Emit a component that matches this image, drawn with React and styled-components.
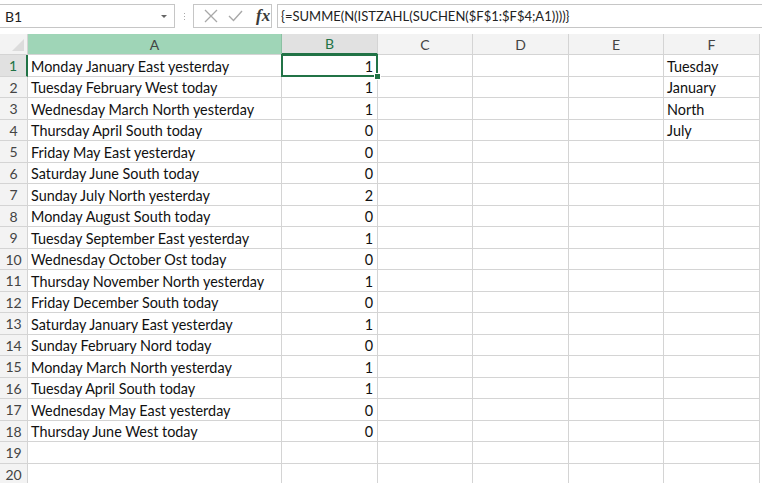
import React from 'react';
import styled, { createGlobalStyle } from 'styled-components';

const GlobalStyle = createGlobalStyle`
    html, body {
        margin: 0;
        padding: 0;
        background: #fff;
        overflow: hidden;
    }
    body {
        font-family: Lato, "Liberation Sans", sans-serif;
    }
`;

const GREEN = '#217346';
const GRID = '#d4d4d4';

const rowsData = [
    ['Monday January East yesterday', 1, 'Tuesday'],
    ['Tuesday February West today', 1, 'January'],
    ['Wednesday March North yesterday', 1, 'North'],
    ['Thursday April South today', 0, 'July'],
    ['Friday May East yesterday', 0],
    ['Saturday June South today', 0],
    ['Sunday July North yesterday', 2],
    ['Monday August South today', 0],
    ['Tuesday September East yesterday', 1],
    ['Wednesday October Ost today', 0],
    ['Thursday November North yesterday', 1],
    ['Friday December South today', 0],
    ['Saturday January East yesterday', 1],
    ['Sunday February Nord today', 0],
    ['Monday March North yesterday', 1],
    ['Tuesday April South today', 1],
    ['Wednesday May East yesterday', 0],
    ['Thursday June West today', 0],
    [],
    [],
];

const columns = ['A', 'B', 'C', 'D', 'E', 'F'];

const Page = styled.div`
    width: 762px;
    height: 483px;
    display: flex;
    flex-direction: column;
    overflow: hidden;
`;

const FormulaBar = styled.div`
    display: flex;
    align-items: center;
    height: 24px;
    margin-top: 4px;
    margin-bottom: 6px;
`;

const NameBox = styled.div`
    width: 175px;
    height: 24px;
    box-sizing: border-box;
    border: 1px solid #c6c6c6;
    border-left: none;
    display: flex;
    align-items: center;
    justify-content: space-between;
    padding: 0 7px 0 5px;
    font-size: 14px;
    color: #222;
`;

const Caret = styled.span`
    width: 0;
    height: 0;
    border-left: 3px solid transparent;
    border-right: 3px solid transparent;
    border-top: 3px solid #666;
`;

const Dots = styled.div`
    width: 18px;
    display: flex;
    flex-direction: column;
    align-items: center;
    gap: 2px;
    span {
        width: 1px;
        height: 1px;
        background: #aaa;
    }
`;

const IconBox = styled.div`
    width: 79px;
    height: 24px;
    box-sizing: border-box;
    border: 1px solid #c6c6c6;
    display: flex;
    align-items: center;
    gap: 10px;
    padding: 0 0 0 10px;
`;

const Fx = styled.span`
    font-family: "Liberation Serif", serif;
    font-style: italic;
    font-weight: bold;
    font-size: 17px;
    color: #3a3a3a;
    margin-left: 3px;
`;

const FormulaInput = styled.div`
    flex: 1;
    height: 24px;
    box-sizing: border-box;
    border: 1px solid #c6c6c6;
    border-right: none;
    margin-left: 5px;
    display: flex;
    align-items: center;
    padding-left: 3px;
    font-size: 13px;
    color: #222;
`;

const Sheet = styled.div`
    display: grid;
    grid-template-columns: 28px 254px 96px 95px 96px 95px 96px;
    grid-template-rows: 21px;
    grid-auto-rows: 21.5px;
`;

const Corner = styled.div`
    background: #f3f3f3;
    border-right: 1px solid ${GRID};
    border-bottom: 1px solid ${GRID};
    box-sizing: border-box;
    position: relative;
    overflow: hidden;
    &::after {
        content: '';
        position: absolute;
        right: 3px;
        bottom: 3px;
        border-left: 12px solid transparent;
        border-bottom: 12px solid #dcdcdc;
    }
`;

const ColHead = styled.div`
    box-sizing: border-box;
    display: flex;
    align-items: center;
    justify-content: center;
    font-size: 14px;
    background: ${p => (p.$active ? '#9fd5b7' : p.$selected ? '#e1e1e1' : '#f3f3f3')};
    color: ${p => (p.$selected ? GREEN : '#444')};
    border-right: 1px solid ${p => (p.$active ? '#8bc1a3' : GRID)};
    border-bottom: ${p => (p.$selected ? `2px solid ${GREEN}` : `1px solid ${GRID}`)};
`;

const RowHead = styled.div`
    box-sizing: border-box;
    display: flex;
    align-items: center;
    justify-content: center;
    padding-top: 1px;
    font-size: 14px;
    background: ${p => (p.$selected ? '#e1e1e1' : '#f3f3f3')};
    color: ${p => (p.$selected ? GREEN : '#444')};
    border-right: ${p => (p.$selected ? `2px solid ${GREEN}` : `1px solid ${GRID}`)};
    border-bottom: 1px solid ${GRID};
`;

const Cell = styled.div`
    box-sizing: border-box;
    display: flex;
    align-items: center;
    justify-content: ${p => (p.$num ? 'flex-end' : 'flex-start')};
    padding: 2px 4px 0 3px;
    font-size: 14.4px;
    color: #111;
    white-space: nowrap;
    border-right: 1px solid ${GRID};
    border-bottom: 1px solid ${GRID};
    position: relative;
    ${p =>
        p.$selected &&
        `
        &::after {
            content: '';
            position: absolute;
            left: -1px;
            top: -1px;
            right: -1px;
            bottom: -1px;
            border: 2px solid ${GREEN};
        }
        &::before {
            content: '';
            position: absolute;
            right: -4px;
            bottom: -4px;
            width: 5px;
            height: 5px;
            background: ${GREEN};
            border: 1px solid #fff;
            z-index: 2;
        }
    `}
`;

function CancelIcon() {
    return (
        <svg width="14" height="14" viewBox="0 0 14 14">
            <path d="M1 1 L13 13 M13 1 L1 13" stroke="#a8a8a8" strokeWidth="1.3" fill="none" />
        </svg>
    );
}

function CheckIcon() {
    return (
        <svg width="15" height="12" viewBox="0 0 15 12">
            <path d="M1 6 L5.5 10.5 L14 1" stroke="#a8a8a8" strokeWidth="1.4" fill="none" />
        </svg>
    );
}

export default function App() {
    return (
        <Page>
            <GlobalStyle />
            <FormulaBar>
                <NameBox>
                    <span>B1</span>
                    <Caret />
                </NameBox>
                <Dots>
                    <span />
                    <span />
                    <span />
                </Dots>
                <IconBox>
                    <CancelIcon />
                    <CheckIcon />
                    <Fx>fx</Fx>
                </IconBox>
                <FormulaInput>{'{=SUMME(N(ISTZAHL(SUCHEN($F$1:$F$4;A1))))}'}</FormulaInput>
            </FormulaBar>
            <Sheet>
                <Corner />
                {columns.map(c => (
                    <ColHead key={c} $active={c === 'A'} $selected={c === 'B'}>
                        {c}
                    </ColHead>
                ))}
                {rowsData.map((r, i) => (
                    <React.Fragment key={i}>
                        <RowHead $selected={i === 0}>{i + 1}</RowHead>
                        <Cell>{r[0]}</Cell>
                        <Cell $num $selected={i === 0}>{r[1]}</Cell>
                        <Cell />
                        <Cell />
                        <Cell />
                        <Cell>{r[2]}</Cell>
                    </React.Fragment>
                ))}
            </Sheet>
        </Page>
    );
}
